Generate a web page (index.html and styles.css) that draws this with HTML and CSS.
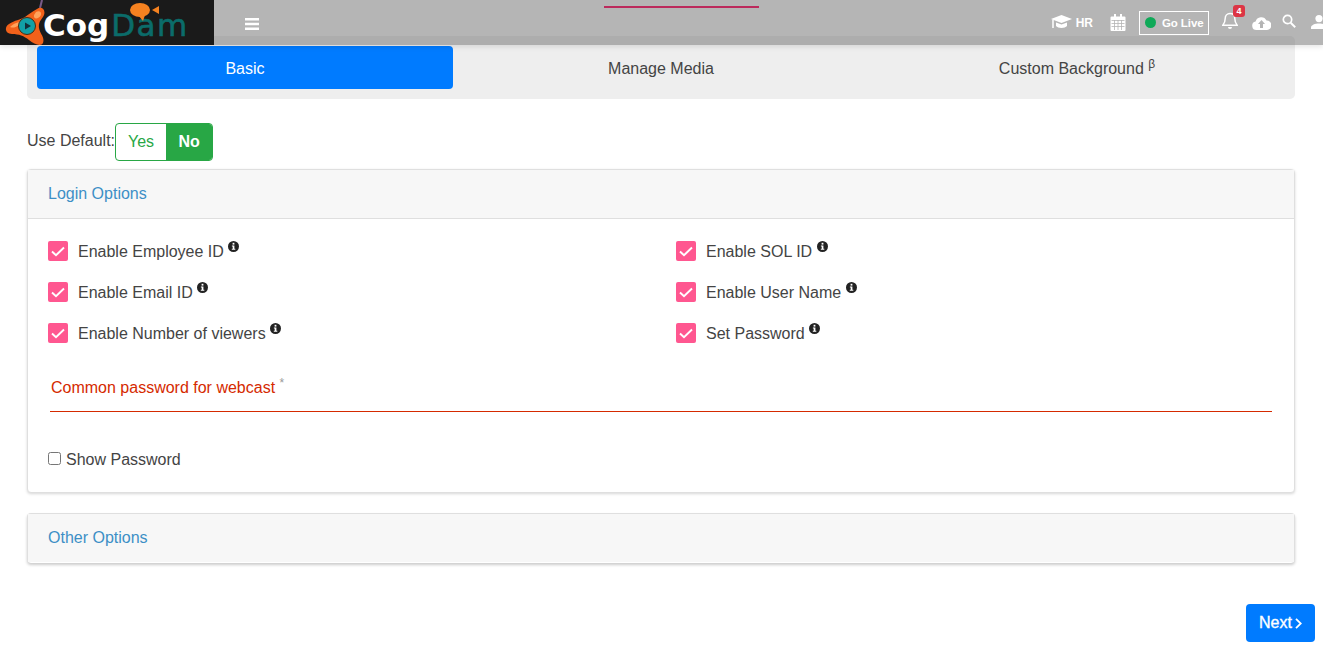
FILE: index.html
```html
<!DOCTYPE html>
<html lang="en">
<head>
<meta charset="utf-8">
<title>CogDam</title>
<link rel="stylesheet" href="styles.css">
</head>
<body>
<header class="topbar">
  <div class="logo">
    <svg class="logo-mark" width="46" height="45" viewBox="0 0 46 45">
      <path d="M41 0 L39 8" stroke="#7a5a88" stroke-width="2" fill="none"/>
      <path d="M36 9 C40 6 45 9 43 15 C41 20 37 21 38 28 C39 34 44 37 42 43 C40 47 33 44 28 40 C23 36 18 34 11 34 C4 34 3 27 8 24 C14 20 19 20 24 17 C28 14 32 11 36 9 Z" fill="#f2611a"/>
      <path d="M35 12 C38 10 41 12 40 15 C38 19 32 20 33 15 Z M9 27 C13 23 18 22 22 21 C19 25 14 29 9 27 Z" fill="#ffa35c"/>
      <circle cx="26" cy="26" r="8.500" fill="#12a0a6" stroke="#4a2a12" stroke-width="1"/>
      <path d="M24 22.500 L30 26 L24 29.500 Z" fill="#12303a"/>
    </svg>
    <span class="logo-cog">Cog</span><span class="logo-dam">Dam</span>
    <svg class="logo-bubble" width="30" height="20" viewBox="0 0 30 20">
      <ellipse cx="10" cy="9" rx="10" ry="7" fill="#f58220"/>
      <path d="M8 14 L13 20 L15 14 Z" fill="#f58220"/>
      <path d="M22 9 L29 5 L29 13 Z" fill="#f58220"/>
    </svg>
  </div>
  <button class="menu-btn" aria-label="Menu">
    <svg width="14" height="12" viewBox="0 0 14 12"><path d="M0 1.200h14M0 6h14M0 10.800h14" stroke="#fff" stroke-width="2.400"/></svg>
  </button>
  <div class="progress"></div>
  <nav class="actions">
    <span class="act-hr">
      <svg width="21" height="15" viewBox="0 0 21 15"><path d="M10.500 0 L21 4 L10.500 8 L0 4 Z" fill="#fff"/><path d="M5 7.500 L10.500 9.500 L16 7.500 V11 C14 13.500 7 13.500 5 11 Z" fill="#fff"/><path d="M2 4.500 V13" stroke="#fff" stroke-width="1.500"/></svg>
      <b>HR</b>
    </span>
    <svg class="act-cal" width="16" height="17" viewBox="0 0 16 17"><path d="M1.500 2.500h2.500V0h2v2.500h4V0h2v2.500h2.500a1 1 0 0 1 1 1V16a1 1 0 0 1-1 1h-13a1 1 0 0 1-1-1V3.500a1 1 0 0 1 1-1Z" fill="#fff"/><path d="M1.500 6.500h13M1.500 9.500h13M1.500 12.500h13M4.500 6v10M8 6v10M11.500 6v10" stroke="#b5b5b5" stroke-width=".8"/></svg>
    <span class="golive"><i class="dot"></i><b>Go Live</b></span>
    <span class="bell">
      <svg width="16" height="18" viewBox="0 0 16 18"><path d="M8 1.500c3 0 4.800 2.200 4.800 5 0 3.500 1 5.200 2.400 6.800H.8C2.200 11.700 3.200 10 3.200 6.500c0-2.800 1.800-5 4.800-5Z" fill="none" stroke="#fff" stroke-width="1.500"/><path d="M6 15h4a2 2 0 0 1-4 0Z" fill="#fff"/></svg>
      <em class="badge">4</em>
    </span>
    <svg class="act-cloud" width="19" height="14" viewBox="0 0 19 14"><path d="M4.500 14A4.300 4.300 0 0 1 3.600 5.500 5.800 5.800 0 0 1 14.500 4.600 4.700 4.700 0 0 1 15 14Z" fill="#fff"/><path d="M9.500 4 L13 8 H11 V12 H8 V8 H6 Z" fill="#b5b5b5"/></svg>
    <svg class="act-search" width="14" height="14" viewBox="0 0 14 14"><circle cx="5.500" cy="5.500" r="4.200" fill="none" stroke="#fff" stroke-width="1.700"/><path d="M8.700 8.700 L13.200 13.200" stroke="#fff" stroke-width="2"/></svg>
    <svg class="act-user" width="16" height="14" viewBox="0 0 16 14"><circle cx="8" cy="3.600" r="3.600" fill="#fff"/><path d="M0 14v-1.500C0 10 4 8.500 8 8.500s8 1.500 8 4V14Z" fill="#fff"/></svg>
  </nav>
</header>

<main class="page">
  <div class="tabs">
    <a class="tab active">Basic</a>
    <a class="tab">Manage Media</a>
    <a class="tab">Custom Background&nbsp;<sup>β</sup></a>
  </div>

  <div class="default-row">
    <span class="default-label">Use Default:</span>
    <div class="toggle">
      <span class="toggle-yes">Yes</span>
      <span class="toggle-no">No</span>
    </div>
  </div>

  <section class="card">
    <h2 class="card-head">Login Options</h2>
    <div class="card-body">
      <div class="options">
        <label class="opt"><span class="check"><svg width="14" height="11" viewBox="0 0 14 11"><path d="M1 5.500 L5 9.300 L13 1.500" fill="none" stroke="#fff" stroke-width="1.900"/></svg></span>Enable Employee ID <svg class="info" width="11" height="11" viewBox="0 0 11 11"><circle cx="5.500" cy="5.500" r="5.500" fill="#222"/><rect x="4.600" y="1.800" width="1.800" height="1.800" fill="#fff"/><path d="M3.900 4.500h2.500v3.200h.9v1H3.800v-1h.9V5.500h-.8Z" fill="#fff"/></svg></label>
        <label class="opt"><span class="check"><svg width="14" height="11" viewBox="0 0 14 11"><path d="M1 5.500 L5 9.300 L13 1.500" fill="none" stroke="#fff" stroke-width="1.900"/></svg></span>Enable SOL ID <svg class="info" width="11" height="11" viewBox="0 0 11 11"><circle cx="5.500" cy="5.500" r="5.500" fill="#222"/><rect x="4.600" y="1.800" width="1.800" height="1.800" fill="#fff"/><path d="M3.900 4.500h2.500v3.200h.9v1H3.800v-1h.9V5.500h-.8Z" fill="#fff"/></svg></label>
        <label class="opt"><span class="check"><svg width="14" height="11" viewBox="0 0 14 11"><path d="M1 5.500 L5 9.300 L13 1.500" fill="none" stroke="#fff" stroke-width="1.900"/></svg></span>Enable Email ID <svg class="info" width="11" height="11" viewBox="0 0 11 11"><circle cx="5.500" cy="5.500" r="5.500" fill="#222"/><rect x="4.600" y="1.800" width="1.800" height="1.800" fill="#fff"/><path d="M3.900 4.500h2.500v3.200h.9v1H3.800v-1h.9V5.500h-.8Z" fill="#fff"/></svg></label>
        <label class="opt"><span class="check"><svg width="14" height="11" viewBox="0 0 14 11"><path d="M1 5.500 L5 9.300 L13 1.500" fill="none" stroke="#fff" stroke-width="1.900"/></svg></span>Enable User Name <svg class="info" width="11" height="11" viewBox="0 0 11 11"><circle cx="5.500" cy="5.500" r="5.500" fill="#222"/><rect x="4.600" y="1.800" width="1.800" height="1.800" fill="#fff"/><path d="M3.900 4.500h2.500v3.200h.9v1H3.800v-1h.9V5.500h-.8Z" fill="#fff"/></svg></label>
        <label class="opt"><span class="check"><svg width="14" height="11" viewBox="0 0 14 11"><path d="M1 5.500 L5 9.300 L13 1.500" fill="none" stroke="#fff" stroke-width="1.900"/></svg></span>Enable Number of viewers <svg class="info" width="11" height="11" viewBox="0 0 11 11"><circle cx="5.500" cy="5.500" r="5.500" fill="#222"/><rect x="4.600" y="1.800" width="1.800" height="1.800" fill="#fff"/><path d="M3.900 4.500h2.500v3.200h.9v1H3.800v-1h.9V5.500h-.8Z" fill="#fff"/></svg></label>
        <label class="opt"><span class="check"><svg width="14" height="11" viewBox="0 0 14 11"><path d="M1 5.500 L5 9.300 L13 1.500" fill="none" stroke="#fff" stroke-width="1.900"/></svg></span>Set Password <svg class="info" width="11" height="11" viewBox="0 0 11 11"><circle cx="5.500" cy="5.500" r="5.500" fill="#222"/><rect x="4.600" y="1.800" width="1.800" height="1.800" fill="#fff"/><path d="M3.900 4.500h2.500v3.200h.9v1H3.800v-1h.9V5.500h-.8Z" fill="#fff"/></svg></label>
      </div>
      <div class="field">
        <label class="field-label">Common password for webcast <sup>*</sup></label>
      </div>
      <label class="show-pass"><input type="checkbox">Show Password</label>
    </div>
  </section>

  <section class="card card-closed">
    <h2 class="card-head">Other Options</h2>
  </section>

  <div class="footer-row">
    <button class="next">Next<svg width="7" height="11" viewBox="0 0 7 11"><path d="M1 .8 L5.800 5.500 L1 10.200" fill="none" stroke="#fff" stroke-width="1.800"/></svg></button>
  </div>
</main>
</body>
</html>
```
FILE: styles.css
```css
* { box-sizing: border-box; }
html, body { margin: 0; height: 646px; overflow: hidden; background: #fff; }
body { font-family: "Liberation Sans", Arial, sans-serif; font-size: 16px; color: #444; }

.topbar {
  position: absolute; top: 0; left: 0; right: 0; height: 45px;
  background: rgba(107, 107, 107, .5);
  box-shadow: 0 2px 5px rgba(0, 0, 0, .1);
  display: flex; align-items: center; z-index: 5;
}
.logo {
  width: 214px; height: 45px; background: #1a1a1a; position: relative;
  display: flex; align-items: center; padding: 6px 0 0 43px;
  font-family: "DejaVu Sans", sans-serif; font-weight: 700; font-size: 31px; line-height: 1;
  flex: none; overflow: hidden;
}
.logo-mark { position: absolute; left: 1px; top: 0; }
.logo-cog { color: #fff; }
.logo-dam { color: #0b6c6a; margin-left: 2px; font-weight: 400; letter-spacing: 1.500px; -webkit-text-stroke: .6px #0b6c6a; }
.logo-bubble { position: absolute; left: 130px; top: 1px; }
.menu-btn { background: none; border: 0; padding: 0; margin-left: 31px; display: flex; margin-top: 2px; }
.progress { position: absolute; left: 604px; top: 6px; width: 155px; height: 2px; background: #bc2a5c; }
.actions { margin-left: auto; display: flex; align-items: center; color: #fff; position: relative; height: 45px; }
.actions b { font-size: 12px; font-weight: 700; }
.act-hr { display: flex; align-items: center; gap: 4px; margin-right: 17px; }
.act-cal { margin-right: 13px; }
.golive {
  width: 70px; height: 24px; border: 1px solid #fff; display: flex; align-items: center;
  padding-left: 5px; gap: 6px; margin-right: 13px;
}
.golive b { font-size: 11.500px; letter-spacing: -.1px; }
.dot { width: 11px; height: 11px; border-radius: 50%; background: #0fa958; }
.bell { position: relative; display: flex; margin-right: 14px; margin-top: -3px; }
.badge {
  position: absolute; left: 11px; top: -7px; width: 12px; height: 12px; border-radius: 3px;
  background: #dc3545; color: #fff; font: 700 9px/12px "Liberation Sans", sans-serif; text-align: center;
}
.act-cloud { margin-right: 11px; }
.act-search { margin-right: 15px; margin-top: -3px; }
.act-user { margin-right: -4px; margin-top: -2px; }

.page { padding: 36px 28px 0 27px; }
.tabs { background: #eee; border-radius: 5px; padding: 10px; height: 63px; display: flex; }
.tab { flex: 1; height: 43px; display: flex; align-items: center; justify-content: center; border-radius: 4px; color: #444; padding-top: 2px; }
.tab.active { background: #007bff; color: #fff; }
.tab sup { font-size: 12px; line-height: 0; position: relative; top: -5px; }

.default-row { display: flex; align-items: center; margin-top: 24px; height: 38px; }
.default-label { padding-bottom: 2px; }
.toggle { display: flex; height: 38px; border: 1px solid #28a745; border-radius: 4px; overflow: hidden; }
.toggle-yes { width: 50px; color: #28a745; display: flex; align-items: center; justify-content: center; }
.toggle-no { width: 46px; background: #28a745; color: #fff; font-weight: 700; display: flex; align-items: center; justify-content: center; }

.card {
  margin-top: 8px; border: 1px solid #dfdfdf; border-radius: 4px; background: #fff;
  box-shadow: 0 1px 3px rgba(0, 0, 0, .16);
}
.card-head {
  margin: 0; font-size: 16px; font-weight: 400; color: #3d8fc6; background: #f7f7f7;
  height: 49px; padding: 0 20px; display: flex; align-items: center; border-bottom: 1px solid #dfdfdf;
}
.card-body { height: 273px; padding: 22px 20px 0; }
.options { display: grid; grid-template-columns: 628px 1fr; grid-auto-rows: 41px; }
.opt { display: flex; align-items: flex-start; height: 20px; line-height: 22px; white-space: pre; }
.check {
  width: 20px; height: 20px; border-radius: 2px; background: #ff5790; margin-right: 10px;
  display: flex; align-items: center; justify-content: center;
}
.info { margin-top: 0; }
.field { margin: 3px 2px 0 2px; height: 45px; border-bottom: 1px solid #d52a00; padding: 12px 0 0 1px; }
.field-label { color: #d52a00; }
.field-label sup { color: #999; font-size: 12px; vertical-align: super; line-height: 0; }
.show-pass { display: flex; align-items: center; margin-top: 38px; height: 20px; }
.show-pass input { width: 13px; height: 13px; margin: -3px 5px 0 0; }

.card-closed { margin-top: 20px; border-bottom-width: 0; height: 50px; box-shadow: 0 2px 3px rgba(0, 0, 0, .2); }
.card-closed .card-head { height: 48px; border-bottom: 0; }

.footer-row { display: flex; justify-content: flex-end; margin: 41px -20px 0 0; }
.next {
  width: 69px; height: 38px; border: 0; border-radius: 4px; background: #007bff; color: #fff;
  font: 400 16px "Liberation Sans", sans-serif; -webkit-text-stroke: .35px #fff; display: flex; align-items: center; justify-content: center; gap: 3px; padding: 0;
}
```
